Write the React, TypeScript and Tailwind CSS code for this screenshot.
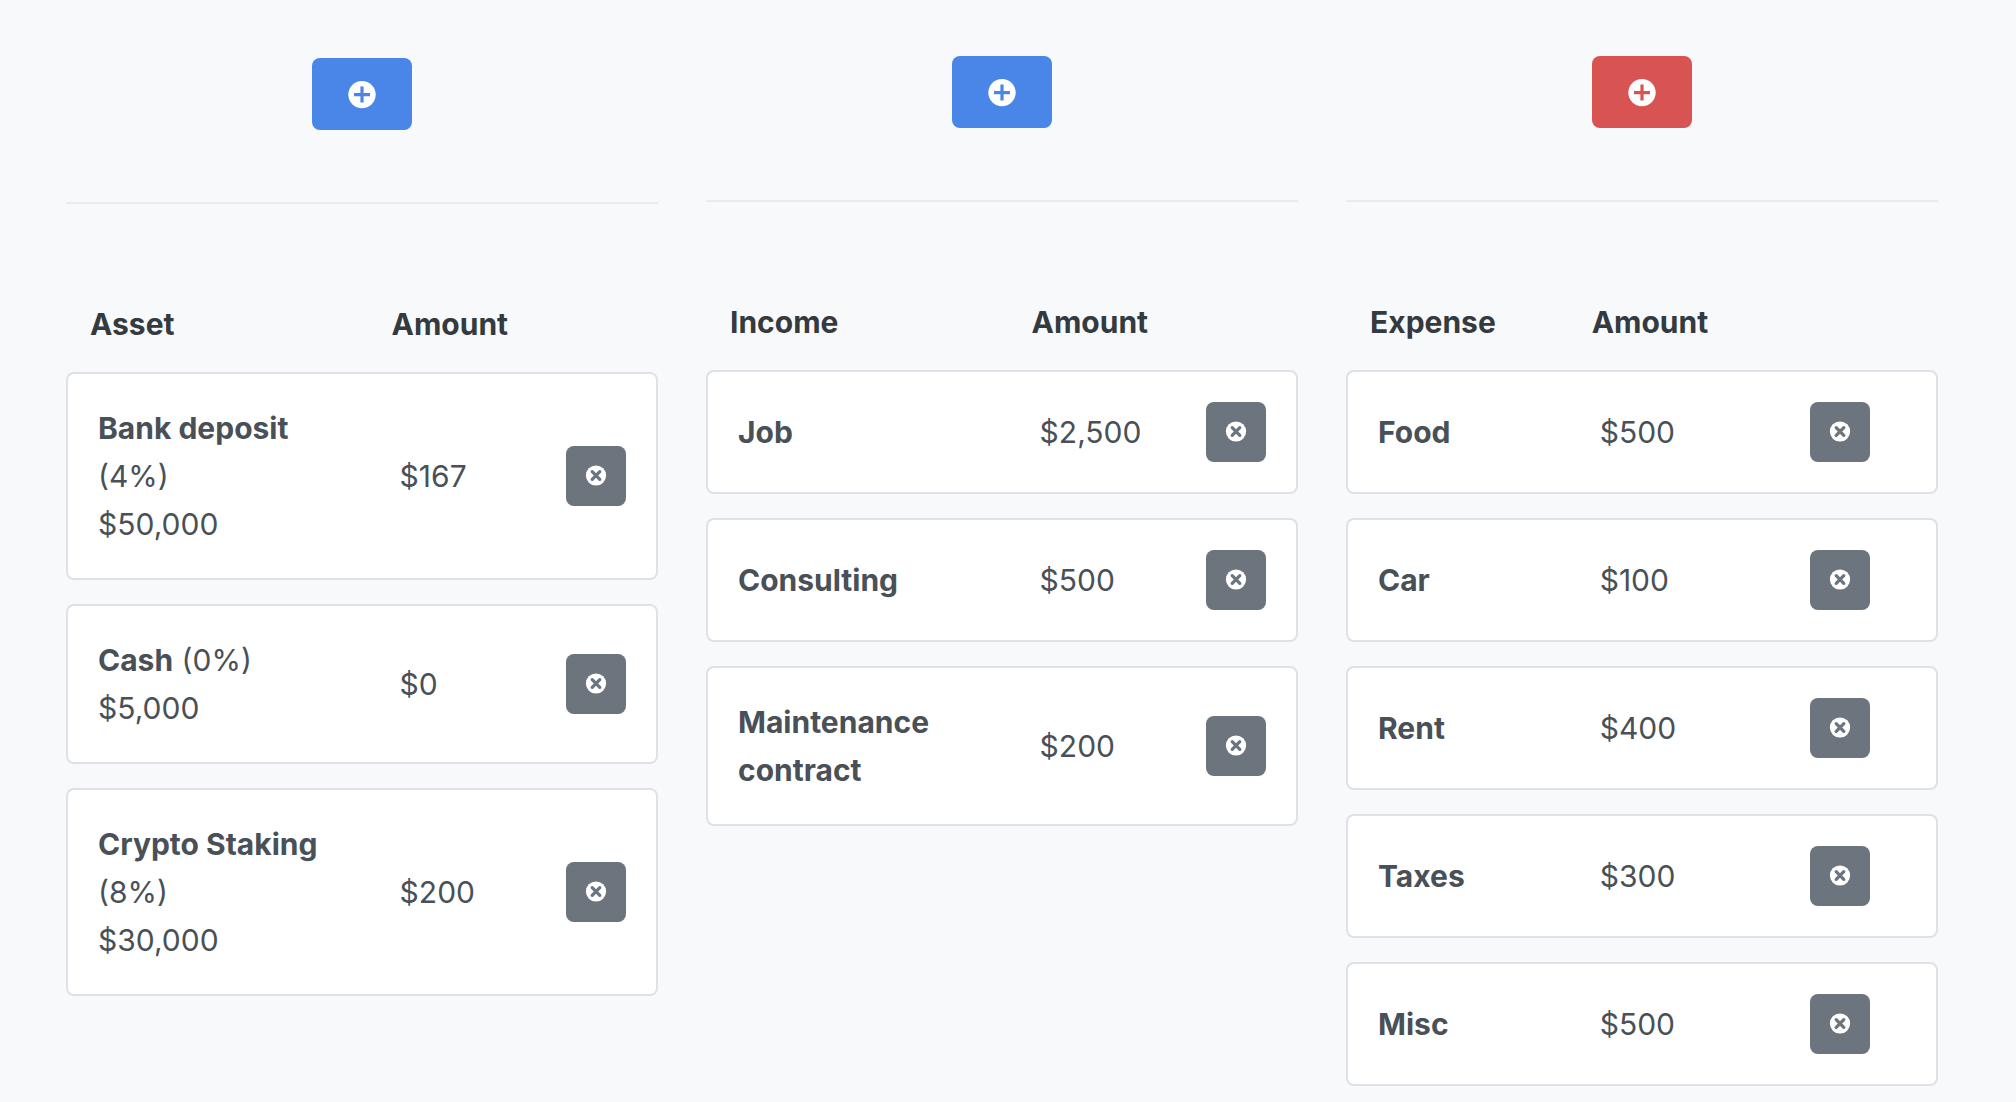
import React, { useState } from 'react';
import clsx from 'clsx';

interface Entry {
  id: number;
  name: string;
  amount: number;
  rate?: number;
  value?: number;
}

interface LedgerProps {
  title: string;
  initial: Entry[];
  danger?: boolean;
  compact?: boolean;
  className?: string;
}

const assets: Entry[] = [
  { id: 1, name: 'Bank deposit', rate: 4, value: 50000, amount: 167 },
  { id: 2, name: 'Cash', rate: 0, value: 5000, amount: 0 },
  { id: 3, name: 'Crypto Staking', rate: 8, value: 30000, amount: 200 },
];

const incomes: Entry[] = [
  { id: 1, name: 'Job', amount: 2500 },
  { id: 2, name: 'Consulting', amount: 500 },
  { id: 3, name: 'Maintenance contract', amount: 200 },
];

const expenses: Entry[] = [
  { id: 1, name: 'Food', amount: 500 },
  { id: 2, name: 'Car', amount: 100 },
  { id: 3, name: 'Rent', amount: 400 },
  { id: 4, name: 'Taxes', amount: 300 },
  { id: 5, name: 'Misc', amount: 500 },
];

const formatMoney = (n: number) => `$${n.toLocaleString('en-US')}`;

function PlusIcon({ className }: { className: string }) {
  return (
    <svg viewBox="0 0 30 30" className={clsx('size-[30px]', className)} aria-hidden="true">
      <circle cx="15" cy="15.6" r="13.7" fill="white" />
      <path d="M15 7.6v16M7 15.6h16" fill="none" stroke="currentColor" strokeWidth="3.2" />
    </svg>
  );
}

function RemoveIcon() {
  return (
    <svg viewBox="0 0 24 24" className="size-6 text-[#6c757d]" aria-hidden="true">
      <circle cx="12" cy="11.5" r="10.1" fill="white" />
      <path d="M8.2 7.7l7.6 7.6M15.8 7.7l-7.6 7.6" fill="none" stroke="currentColor" strokeWidth="3.2" strokeLinecap="round" />
    </svg>
  );
}

function Ledger({ title, initial, danger, compact, className }: LedgerProps) {
  const [entries, setEntries] = useState(initial);

  const handleAdd = () => {
    setEntries(list => [...list, { id: Date.now(), name: `New ${title.toLowerCase()}`, amount: 0 }]);
  };

  const handleRemove = (id: number) => {
    setEntries(list => list.filter(e => e.id !== id));
  };

  return (
    <section className={className}>
      <div className="flex justify-center">
        <button
          type="button"
          onClick={handleAdd}
          aria-label={`Add ${title}`}
          className={clsx(
            'flex h-[72px] w-[100px] items-center justify-center rounded-lg cursor-pointer',
            danger ? 'bg-[#d85453] hover:bg-[#c94644]' : 'bg-[#4986e8] hover:bg-[#3876dc]'
          )}
        >
          <PlusIcon className={danger ? 'text-[#d85453]' : 'text-[#4986e8]'} />
        </button>
      </div>

      <hr className="my-[72px] border-t-2 border-[#e9ebed]" />

      <table className="w-full table-fixed border-separate border-spacing-x-0 border-spacing-y-6 text-left">
        <colgroup>
          <col className={compact ? 'w-[41.5%]' : 'w-[55%]'} />
          <col />
          <col className={compact ? 'w-32' : 'w-[92px]'} />
        </colgroup>
        <thead>
          <tr className="text-[#343a40]">
            <th className="p-0 pl-6 font-bold">{title}</th>
            <th className="p-0 font-bold">Amount</th>
            <td />
          </tr>
        </thead>
        <tbody>
          {entries.map(e => (
            <tr key={e.id}>
              <td className="rounded-l-lg border-y-2 border-l-2 border-[#dee2e6] bg-white py-[30px] pl-[30px] pr-12">
                <strong className="font-bold">{e.name}</strong>
                {e.rate !== undefined && <span> ({e.rate}%)</span>}
                {e.value !== undefined && <div>{formatMoney(e.value)}</div>}
              </td>
              <td className="border-y-2 border-[#dee2e6] bg-white py-[30px] pl-2">{formatMoney(e.amount)}</td>
              <td className="rounded-r-lg border-y-2 border-r-2 border-[#dee2e6] bg-white py-[30px]">
                <button
                  type="button"
                  onClick={() => handleRemove(e.id)}
                  aria-label={`Remove ${e.name}`}
                  className="flex size-[60px] items-center justify-center rounded-lg bg-[#6c757d] hover:bg-[#5c636a] cursor-pointer"
                >
                  <RemoveIcon />
                </button>
              </td>
            </tr>
          ))}
        </tbody>
      </table>
    </section>
  );
}

export default function App() {
  return (
    <main className="grid min-h-screen grid-cols-3 items-start gap-12 bg-[#f8f9fb] pt-14 pr-[78px] pl-[66px] font-['Inter','Liberation_Sans',sans-serif] text-[30px] leading-[48px] text-[#495057]">
      <Ledger title="Asset" initial={assets} className="pt-0.5" />
      <Ledger title="Income" initial={incomes} />
      <Ledger title="Expense" initial={expenses} danger compact />
    </main>
  );
}
